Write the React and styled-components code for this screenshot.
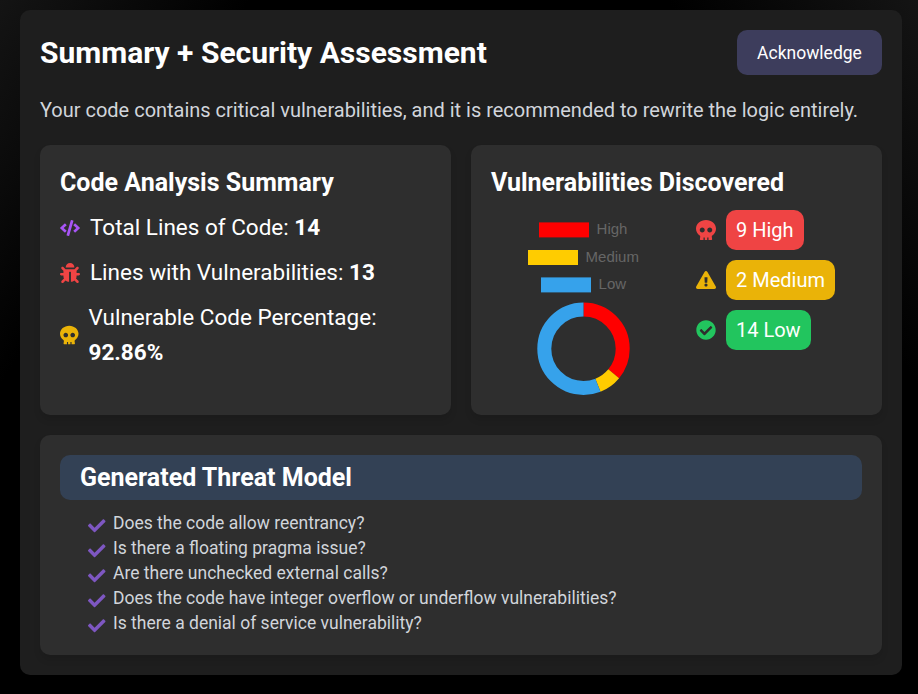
import React from 'react';
import styled, { createGlobalStyle } from 'styled-components';
import { FaCode, FaBug, FaSkull, FaExclamationTriangle, FaCheckCircle, FaCheck } from 'react-icons/fa';

const GlobalStyle = createGlobalStyle`
  *, *::before, *::after { box-sizing: border-box; }
  html, body { margin: 0; background: #000; }
  h1, h2, p, ul { margin: 0; padding: 0; }
  body { font-family: Roboto, "Liberation Sans", sans-serif; color: #fff; overflow: hidden; }
`;

const Page = styled.main`
  height: 694px;
  padding: 10px 16px 0 20px;
  background:
    linear-gradient(123deg, #141414 0, #000 210px, transparent 210px),
    linear-gradient(237deg, #141414 0, #000 210px);
`;

const Panel = styled.section`
  display: flex;
  flex-direction: column;
  height: 665px;
  padding: 20px;
  border-radius: 10px;
  background: #1e1e1e;
`;

const Header = styled.header`
  display: flex;
  align-items: center;
  justify-content: space-between;
  height: 45px;
`;

const Title = styled.h1`
  font-size: 30px;
  line-height: 45px;
  font-weight: 700;
`;

const AckButton = styled.button`
  width: 145px;
  height: 45px;
  padding: 1px 0 0;
  border: 0;
  border-radius: 10px;
  background: #3d3d5c;
  color: #fff;
  font: 400 17.5px/26px Roboto, sans-serif;
`;

const Lead = styled.p`
  margin-top: 20px;
  font-size: 20px;
  line-height: 30px;
  letter-spacing: -0.01px;
  color: #d1d5db;
`;

const Columns = styled.div`
  display: grid;
  grid-template-columns: 1fr 1fr;
  gap: 20px;
  margin: 20px 0;
`;

const Card = styled.section`
  height: ${({ $height }) => $height}px;
  padding: 20px;
  border-radius: 10px;
  background: #2e2e2e;
  box-shadow: 0 5px 7px rgba(0, 0, 0, 0.1);
`;

const CardTitle = styled.h2`
  font-size: 25px;
  line-height: 35px;
  font-weight: 700;
`;

const Stat = styled.div`
  display: flex;
  align-items: center;
  width: 330px;
  margin-top: 10px;
  font-size: 22.5px;
  line-height: 35px;
  svg {
    flex: none;
    width: ${({ $iconWidth }) => $iconWidth || 20}px;
    height: 20px;
    margin-right: 10px;
    color: ${({ $color }) => $color};
  }
`;

const Findings = styled.div`
  display: flex;
  justify-content: space-between;
  margin-top: 10px;
`;

const ChartBox = styled.div`
  width: 185px;
  height: 185px;
  svg { display: block; }
  text { font: 15px "Liberation Sans", Arial, sans-serif; fill: #666; }
`;

const Levels = styled.div`
  display: flex;
  flex-direction: column;
  gap: 10px;
  width: 166px;
`;

const Level = styled.div`
  display: flex;
  align-items: center;
  gap: 10px;
  color: ${({ $color }) => $color};
`;

const Badge = styled.span`
  padding: 5px 10px;
  border-radius: 10px;
  background: ${({ $color }) => $color};
  color: #fff;
  font-size: 20px;
  line-height: 30px;
`;

const ModelTitle = styled(CardTitle)`
  height: 45px;
  padding: 0 20px;
  border-radius: 10px;
  background: #334155;
  line-height: 45px;
`;

const Questions = styled.ul`
  margin: 11px 0 0 28.3px;
  list-style: none;
`;

const Question = styled.li`
  display: flex;
  align-items: center;
  gap: 7.2px;
  height: 25px;
  font-size: 17.5px;
  line-height: 25px;
  color: #d1d5db;
  svg { flex: none; margin-top: 4px; color: #7e57c2; }
`;

const segments = [
  { label: 'High', color: '#ff0000', value: 9, x: 48, y: 12.4 },
  { label: 'Medium', color: '#ffcc00', value: 2, x: 37, y: 40 },
  { label: 'Low', color: '#36a2eb', value: 14, x: 50, y: 67.4 },
];

const questions = [
  'Does the code allow reentrancy?',
  'Is there a floating pragma issue?',
  'Are there unchecked external calls?',
  'Does the code have integer overflow or underflow vulnerabilities?',
  'Is there a denial of service vulnerability?',
];

function Doughnut() {
  let start = 0;
  return (
    <svg width="185" height="185" viewBox="0 0 185 185">
      {segments.map(({ label, color, x, y }) => (
        <g key={label}>
          <rect x={x} y={y} width="50" height="15" fill={color} />
          <text x={x + 57.6} y={Math.round(y) + 12}>{label}</text>
        </g>
      ))}
      {segments.map(({ label, color, value }) => {
        const offset = -start;
        start += value;
        return (
          <circle key={label} cx="92.5" cy="138.7" r="39.2" fill="none" stroke={color}
            strokeWidth="14" pathLength="25" strokeDasharray={`${value} ${25 - value}`}
            strokeDashoffset={offset} transform="rotate(-90 92.5 138.7)" />
        );
      })}
    </svg>
  );
}

export default function App() {
  return (
    <>
      <GlobalStyle />
      <Page>
        <Panel>
          <Header>
            <Title>Summary + Security Assessment</Title>
            <AckButton>Acknowledge</AckButton>
          </Header>
          <Lead>Your code contains critical vulnerabilities, and it is recommended to rewrite the logic entirely.</Lead>
          <Columns>
            <Card $height={270}>
              <CardTitle>Code Analysis Summary</CardTitle>
              <Stat $color="#a855f7"><FaCode /><span>Total Lines of Code: <b>14</b></span></Stat>
              <Stat $color="#ef4444"><FaBug /><span>Lines with Vulnerabilities: <b>13</b></span></Stat>
              <Stat $color="#eab308" $iconWidth={18.5}><FaSkull /><span>Vulnerable Code Percentage: <b>92.86%</b></span></Stat>
            </Card>
            <Card $height={270}>
              <CardTitle>Vulnerabilities Discovered</CardTitle>
              <Findings>
                <ChartBox><Doughnut /></ChartBox>
                <Levels>
                  <Level $color="#ef4444"><FaSkull size={20} /><Badge $color="#ef4444">9 High</Badge></Level>
                  <Level $color="#eab308"><FaExclamationTriangle size={20} /><Badge $color="#eab308">2 Medium</Badge></Level>
                  <Level $color="#22c55e"><FaCheckCircle size={20} /><Badge $color="#22c55e">14 Low</Badge></Level>
                </Levels>
              </Findings>
            </Card>
          </Columns>
          <Card $height={220}>
            <ModelTitle>Generated Threat Model</ModelTitle>
            <Questions>
              {questions.map((q) => <Question key={q}><FaCheck size={17.5} />{q}</Question>)}
            </Questions>
          </Card>
        </Panel>
      </Page>
    </>
  );
}
